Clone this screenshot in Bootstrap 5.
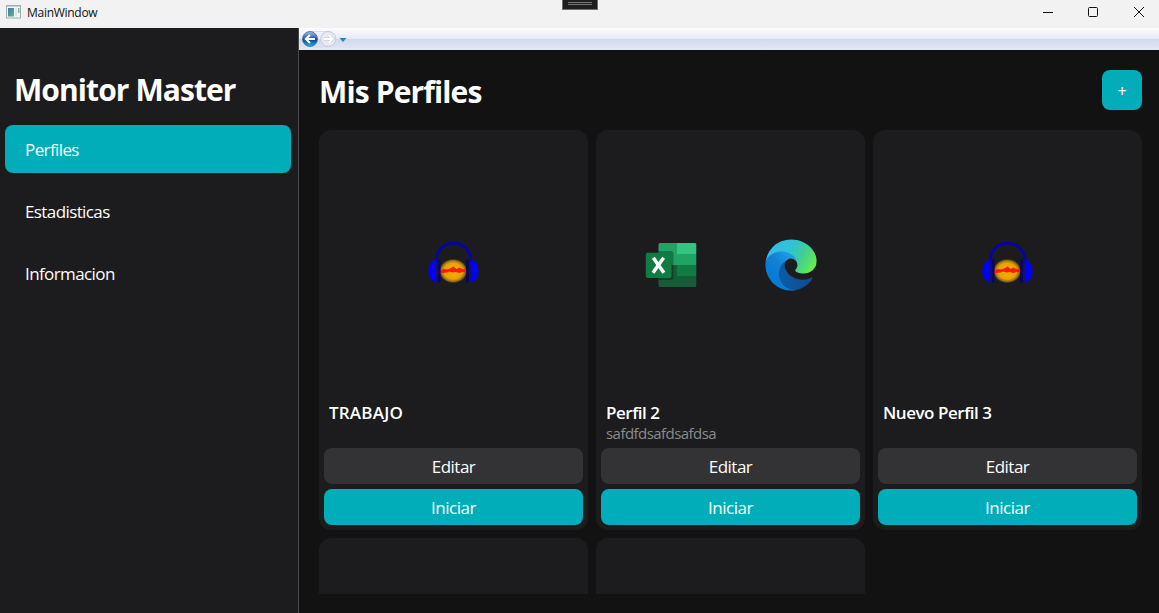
<!DOCTYPE html>
<html lang="es">
<head>
<meta charset="utf-8">
<meta name="viewport" content="width=device-width, initial-scale=1">
<title>MainWindow</title>
<link href="https://cdn.jsdelivr.net/npm/bootstrap@5.3.0/dist/css/bootstrap.min.css" rel="stylesheet">
<style>
  body { font-family: "Open Sans", "Noto Sans", sans-serif; background: #121212; color: #fff; }
  svg { display: block; flex: none; }
  .titlebar { height: 28px; background: #f2f2f2; color: #111; padding-left: 6px; }
  .titlebar-text { font-size: 12px; letter-spacing: -.28px; line-height: 16px; margin: -2px 0 0 6px; }
  .grip { left: 562px; top: 0; width: 36px; height: 10px; background: #1f1f1f; border: 1px solid #707070; border-top: 0; padding: 2px 5px 0; }
  .grip i { display: block; height: 1px; background: #777; margin-bottom: 1px; }
  .sidebar { width: 299px; background: #1c1c1e; border-right: 1px solid #4a4a4c; padding: 42px 7px 0 5px; }
  .brand { font-size: 30px; line-height: 40px; font-weight: 700; padding-left: 9px; margin: 0 0 15px; letter-spacing: -.92px; white-space: nowrap; }
  .side-nav { gap: 14px; }
  .side-nav .nav-link { height: 48px; line-height: 49px; padding: 0 20px; border-radius: 8px; color: #fff; font-size: 17px; letter-spacing: -.6px; }
  .side-nav .nav-link.active, .btn-accent, .btn-accent:hover { background: #00adb9; color: #fff; }
  .journal { height: 22px; background: linear-gradient(#fdfdff 0, #e5e9f5 11px, #cfd8ed 11px, #e4e8f6 22px); padding-left: 2px; }
  .page { padding: 20px 17px 0 20px; }
  .page-head { height: 40px; }
  .page-title { font-size: 30px; line-height: 40px; font-weight: 700; letter-spacing: -.87px; margin: 2px 0 0; }
  .btn { --bs-btn-border-width: 0; border-radius: 8px; padding: 0; }
  .btn-add { width: 40px; height: 40px; font-size: 16px; line-height: 42px; }
  .viewport { margin-top: 20px; height: 464px; overflow: hidden; }
  .profiles { display: grid; grid-template-columns: repeat(3, 269px); gap: 8px; }
  .profile { height: 400px; background: #1c1c1e; border-radius: 12px; padding: 0 5px 5px; }
  .apps { height: 270px; }
  .app-slot { width: 120px; }
  .profile-name { font-size: 17px; line-height: 24px; font-weight: 600; letter-spacing: -.47px; margin: 1px 5px 0; }
  .profile-name.caps { letter-spacing: .2px; }
  .profile-note { font-size: 15px; line-height: 16px; height: 23px; color: #8b8b8c; letter-spacing: -.55px; margin: 0 5px; }
  .profile .btn { height: 36px; line-height: 37px; font-size: 17px; letter-spacing: -.5px; color: #fff; }
  .btn-edit, .btn-edit:hover { background: #333335; }
  .actions { gap: 5px; }
</style>
</head>
<body class="vh-100 overflow-hidden d-flex flex-column">

<svg width="0" height="0" class="position-absolute" aria-hidden="true">
  <defs>
    <radialGradient id="glow"><stop offset="0" stop-color="#ffad00"/><stop offset=".65" stop-color="#e8a205"/><stop offset=".85" stop-color="#a87a10" stop-opacity=".85"/><stop offset="1" stop-color="#3a2d18" stop-opacity="0"/></radialGradient>
    <linearGradient id="e1" x1=".25" x2="1" y1=".5" y2=".5"><stop offset="0" stop-color="#0c59a4"/><stop offset="1" stop-color="#114a8b"/></linearGradient>
    <linearGradient id="e2" x1=".9" y1=".3" x2=".3" y2="1"><stop offset="0" stop-color="#1b9de2"/><stop offset=".4" stop-color="#1380d4"/><stop offset="1" stop-color="#0078d7"/></linearGradient>
    <linearGradient id="e3" x1="0" y1=".3" x2="1" y2=".65"><stop offset="0" stop-color="#35b9f1"/><stop offset=".42" stop-color="#30c2d4"/><stop offset=".7" stop-color="#40cf93"/><stop offset="1" stop-color="#66eb4d"/></linearGradient>
    <linearGradient id="ball" x1="0" y1="0" x2="0" y2="1"><stop offset="0" stop-color="#a2bfe2"/><stop offset=".45" stop-color="#285fae"/><stop offset=".55" stop-color="#0c429b"/><stop offset="1" stop-color="#25b6f4"/></linearGradient>
    <linearGradient id="pane" x1="0" y1="0" x2="1" y2="1"><stop offset="0" stop-color="#3c78b4"/><stop offset="1" stop-color="#5fb585"/></linearGradient>
    <symbol id="audacity" viewBox="0 0 52 52">
      <ellipse cx="25.200" cy="32" rx="14.500" ry="12.500" fill="url(#glow)"/>
      <path d="M12 31.500l4-1.500 3 .5 3-1 3.500-2 3 2.500 3-1.500 3 1.500 4 .5v3l-4-.5-3 1-4-1-3 .5-3-1-3 1-4 .5-4.500 1z" fill="#ff1b00"/>
      <path d="M8.300 24C7.500 12 15 4.300 25.500 4.300S43.700 12 42.900 24" fill="none" stroke="#0505a0" stroke-width="3"/>
      <path d="M8.300 20.500C2.500 22 .5 27 .5 32s2 10 7.800 11.700zM42.700 20.500c5.800 1.500 7.800 6.500 7.800 11.500s-2 10-7.800 11.700z" fill="#00f"/>
      <path d="M11.200 20.500v23M39.500 20.500v23" stroke="#060663" stroke-width="2.600"/>
    </symbol>
    <symbol id="excel" viewBox="0 0 52 52">
      <path fill="#21a366" d="M15 4h17v22H13.500V5.500Q13.500 4 15 4z"/>
      <path fill="#33c481" d="M32 4h18q1.300 0 1.300 1.500V15H32z"/>
      <path fill="#21a366" d="M32 15h19.300v11H32z"/>
      <path fill="#107c41" d="M32 26h19.300v11H32z"/>
      <path fill="#185c37" d="M13.500 26H32v11h19.300v9.500q0 1.500-1.500 1.500H15q-1.500 0-1.500-1.500z"/>
      <path d="M13.500 12h13q2 0 2 2v25q0 2-2 2h-13z" opacity=".28"/>
      <rect x=".8" y="13.700" width="25.700" height="25.300" rx="1.800" fill="#107c41"/>
      <path fill="none" stroke="#fff" stroke-width="3.500" d="M8.300 18.700l10.600 15.100M18.600 18.700L8 33.800"/>
    </symbol>
    <symbol id="edge" viewBox="2.500 2.800 260.300 260.300">
      <path fill="url(#e1)" d="M235.680 195.460a93.730 93.730 0 0 1-10.540 4.710 101.870 101.870 0 0 1-35.900 6.460c-47.320 0-88.540-32.550-88.540-74.320A31.480 31.480 0 0 1 117.130 105c-42.800 1.800-53.800 46.400-53.800 72.530 0 73.880 68.090 81.370 82.760 81.370 7.910 0 19.840-2.300 27-4.560l1.310-.44A128.340 128.340 0 0 0 241 201.100a4 4 0 0 0-5.320-5.640z"/>
      <path fill="url(#e2)" d="M110.340 246.340A79.200 79.200 0 0 1 87.600 225a80.720 80.720 0 0 1 29.530-120c3.120-1.470 8.450-4.130 15.540-4a32.350 32.350 0 0 1 25.690 13 31.880 31.880 0 0 1 6.360 18.660c0-.21 24.460-79.600-80-79.600-43.900 0-80 41.660-80 78.210a130.150 130.150 0 0 0 12.110 56 128 128 0 0 0 156.380 67.110 75.550 75.550 0 0 1-62.780-8z"/>
      <path fill="url(#e3)" d="M156.940 153.780c-.81 1.050-3.300 2.500-3.300 5.660 0 2.610 1.700 5.120 4.720 7.230 14.380 10 41.490 8.680 41.560 8.680A59.560 59.560 0 0 0 230.190 167a61.380 61.380 0 0 0 30.430-52.880c.26-22.410-8-37.310-11.340-43.910C228.090 28.760 182.350 4.920 132.610 4.920a128 128 0 0 0-128 126.200C5.100 94.620 41.370 65.150 84.610 65.150c3.500 0 23.460.34 42 10.070 16.340 8.580 24.900 18.940 30.850 29.210 6.180 10.670 7.280 24.150 7.280 29.520S162 147.280 156.940 153.780z"/>
    </symbol>
  </defs>
</svg>

<header class="titlebar position-relative d-flex align-items-center flex-shrink-0">
  <svg width="15" height="14" viewBox="0 0 15 14" style="margin-top:-4px"><rect x=".5" y=".5" width="14" height="12.500" fill="#f4f5f6" stroke="#a7acb2"/><path d="M1 1.500h13" stroke="#c9cdd2"/><rect x="2" y="3" width="6" height="8.500" fill="url(#pane)"/><path d="M9 3h2v8.500H9z" fill="#dde6e9"/><path d="M12 3h1.500v5H12z" fill="#79b8a8"/></svg>
  <span class="titlebar-text">MainWindow</span>
  <div class="grip position-absolute"><i></i><i></i></div>
  <svg class="ms-auto" width="117" height="28" viewBox="1042 0 117 28" fill="none" stroke="#111"><path d="M1043 12.500h10"/><rect x="1088.500" y="7.500" width="9" height="9" rx="1"/><path d="M1134 7l10 10M1144 7l-10 10"/></svg>
</header>

<div class="d-flex flex-grow-1 overflow-hidden">
  <aside class="sidebar flex-shrink-0">
    <h1 class="brand">Monitor Master</h1>
    <nav class="side-nav nav flex-column">
      <a class="nav-link active" href="#">Perfiles</a>
      <a class="nav-link" href="#">Estadisticas</a>
      <a class="nav-link" href="#">Informacion</a>
    </nav>
  </aside>

  <main class="flex-grow-1">
    <div class="journal">
      <svg width="50" height="22" viewBox="0 0 50 22">
        <path d="M9 3.500h20M9 18.500h20" stroke="#d5dced"/>
        <circle cx="9" cy="11" r="7.500" fill="url(#ball)" stroke="#49679c" stroke-width=".8"/>
        <path d="M14 11H5M9 7l-4.200 4L9 15" fill="none" stroke="#fff" stroke-width="2"/>
        <circle cx="27.300" cy="11" r="7.500" fill="#e9ebf1" stroke="#c3c9d8"/>
        <path d="M22.500 11h9M27.500 7l4.200 4-4.200 4" fill="none" stroke="#c6cad3" stroke-width="3"/>
        <path d="M22.500 11h9M27.500 7l4.200 4-4.200 4" fill="none" stroke="#fff" stroke-width="1.800"/>
        <path d="M38.500 10h7L42 14z" fill="#168dbb"/>
      </svg>
    </div>
    <section class="page">
      <div class="page-head d-flex justify-content-between align-items-start">
        <h2 class="page-title">Mis Perfiles</h2>
        <button class="btn btn-accent btn-add" type="button">+</button>
      </div>
      <div class="viewport">
        <div class="profiles">
          <article class="profile">
            <div class="apps d-flex justify-content-center align-items-center">
              <div class="app-slot d-flex justify-content-center"><svg width="52" height="52"><use href="#audacity"/></svg></div>
            </div>
            <h3 class="profile-name caps">TRABAJO</h3>
            <p class="profile-note"></p>
            <div class="actions d-grid">
              <button class="btn btn-edit" type="button">Editar</button>
              <button class="btn btn-accent" type="button">Iniciar</button>
            </div>
          </article>
          <article class="profile">
            <div class="apps d-flex justify-content-center align-items-center">
              <div class="app-slot d-flex justify-content-center"><svg width="52" height="52"><use href="#excel"/></svg></div>
              <div class="app-slot d-flex justify-content-center"><svg width="52" height="52"><use href="#edge"/></svg></div>
            </div>
            <h3 class="profile-name">Perfil 2</h3>
            <p class="profile-note">safdfdsafdsafdsa</p>
            <div class="actions d-grid">
              <button class="btn btn-edit" type="button">Editar</button>
              <button class="btn btn-accent" type="button">Iniciar</button>
            </div>
          </article>
          <article class="profile">
            <div class="apps d-flex justify-content-center align-items-center">
              <div class="app-slot d-flex justify-content-center"><svg width="52" height="52"><use href="#audacity"/></svg></div>
            </div>
            <h3 class="profile-name">Nuevo Perfil 3</h3>
            <p class="profile-note"></p>
            <div class="actions d-grid">
              <button class="btn btn-edit" type="button">Editar</button>
              <button class="btn btn-accent" type="button">Iniciar</button>
            </div>
          </article>
          <article class="profile"></article>
          <article class="profile"></article>
        </div>
      </div>
    </section>
  </main>
</div>
<script src="https://cdn.jsdelivr.net/npm/bootstrap@5.3.0/dist/js/bootstrap.bundle.min.js"></script>
</body>
</html>
